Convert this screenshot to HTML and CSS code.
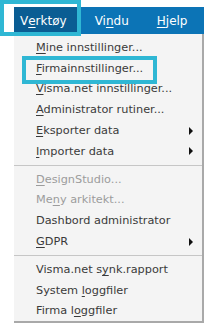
FILE: index.html
```html
<!DOCTYPE html>
<html>
<head>
<meta charset="utf-8">
<link rel="stylesheet" href="styles.css">
</head>
<body>
<div class="app">
  <nav class="menubar">
    <span class="top-item selected">V<u>e</u>rktøy</span>
    <span class="top-item">Vi<u>n</u>du</span>
    <span class="top-item"><u>H</u>jelp</span>
  </nav>
  <div class="dropdown">
    <div class="item"><span><u>M</u>ine innstillinger...</span></div>
    <div class="item"><span><u>F</u>irmainnstillinger...</span></div>
    <div class="item"><span><u>V</u>isma.net innstillinger...</span></div>
    <div class="item"><span><u>A</u>dministrator rutiner...</span></div>
    <div class="item"><span><u>E</u>ksporter data</span><span class="arrow"></span></div>
    <div class="item"><span><u>I</u>mporter data</span><span class="arrow"></span></div>
    <div class="sep"></div>
    <div class="item disabled"><span><u>D</u>esignStudio...</span></div>
    <div class="item disabled"><span>Me<u>n</u>y arkitekt...</span></div>
    <div class="item"><span>Dashbord administrator</span></div>
    <div class="item"><span><u>G</u>DPR</span><span class="arrow"></span></div>
    <div class="sep"></div>
    <div class="item"><span>Visma.net s<u>y</u>nk.rapport</span></div>
    <div class="item"><span>System <u>l</u>oggfiler</span></div>
    <div class="item"><span>Firma l<u>o</u>ggfiler</span></div>
    <div class="highlight item-highlight"></div>
  </div>
  <div class="highlight top-highlight"></div>
</div>
</body>
</html>
```

FILE: styles.css
```css
html, body {
  margin: 0;
  padding: 0;
  background: #ffffff;
}

.app {
  position: relative;
  width: 204px;
  height: 323px;
  padding: 7px 0 0 14px;
  box-sizing: border-box;
  font-family: "DejaVu Sans", Verdana, sans-serif;
  font-size: 11.3px;
  overflow: hidden;
}

.menubar {
  display: flex;
  height: 27px;
  background: #0c74b6;
  color: #ffffff;
  font-size: 12px;
}

.top-item {
  display: flex;
  align-items: center;
  padding: 0 10px 0 6px;
  margin-right: 12px;
}

.top-item.selected {
  background: #0a5d93;
  padding-right: 13px;
  margin-right: 9px;
}

.top-item u {
  text-underline-offset: 2px;
}

.dropdown {
  position: relative;
  background: #f4f4f4;
  border-right: 2px solid #a9a9a9;
  border-bottom: 2px solid #a9a9a9;
  padding-top: 3px;
  height: 289px;
  box-sizing: border-box;
  color: #3a3a3a;
}

.item {
  display: flex;
  align-items: center;
  justify-content: space-between;
  height: 20.8px;
  padding: 0 9px 0 22px;
}

.item u {
  text-underline-offset: 2px;
}

.item.disabled {
  color: #9c9c9c;
}

.arrow {
  width: 0;
  height: 0;
  border-top: 4px solid transparent;
  border-bottom: 4px solid transparent;
  border-left: 4px solid #111111;
}

.sep {
  height: 7px;
  display: flex;
  align-items: center;
}

.sep::before {
  content: "";
  flex: 1;
  height: 1px;
  background: #c6c6c6;
}

.highlight {
  position: absolute;
  border: 4px solid #2fb7d4;
  box-sizing: border-box;
  pointer-events: none;
}

.top-highlight {
  left: 0;
  top: 0;
  width: 81px;
  height: 36px;
}

.item-highlight {
  left: 8px;
  top: 22px;
  width: 135px;
  height: 28px;
}
```
